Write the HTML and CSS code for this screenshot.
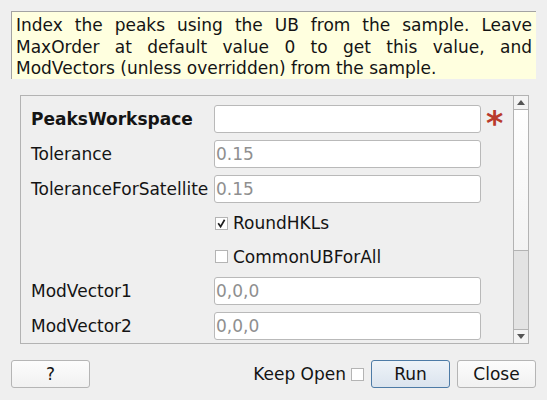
FILE: index.html
```html
<!DOCTYPE html>
<html>
<head>
<meta charset="utf-8">
<link rel="stylesheet" href="styles.css">
</head>
<body>
<div class="dialog">
  <div class="desc">Index the peaks using the UB from the sample. Leave MaxOrder at default value 0 to get this value, and ModVectors (unless overridden) from the sample.</div>
  <div class="scrollframe">
    <div class="content">
      <div class="lbl bold">PeaksWorkspace</div>
      <div class="field"></div>
      <div class="req">*</div>

      <div class="lbl">Tolerance</div>
      <div class="field ph">0.15</div>
      <div></div>

      <div class="lbl">ToleranceForSatellite</div>
      <div class="field ph">0.15</div>
      <div></div>

      <div></div>
      <div class="check"><span class="box"><svg width="11" height="11" viewBox="0 0 11 11"><path d="M2.2 5.2 L4.6 8.6 L8.6 1.8" fill="none" stroke="#1e1e1e" stroke-width="1.7"/></svg></span>RoundHKLs</div>
      <div></div>

      <div></div>
      <div class="check"><span class="box"></span>CommonUBForAll</div>
      <div></div>

      <div class="lbl">ModVector1</div>
      <div class="field ph">0,0,0</div>
      <div></div>

      <div class="lbl">ModVector2</div>
      <div class="field ph">0,0,0</div>
      <div></div>
    </div>
    <div class="vscroll">
      <div class="arrow up"><svg width="8" height="5" viewBox="0 0 8 5"><path d="M0 5 L4 0 L8 5 Z" fill="#555"/></svg></div>
      <div class="handle"></div>
      <div class="track"></div>
      <div class="arrow down"><svg width="8" height="5" viewBox="0 0 8 5"><path d="M0 0 L4 5 L8 0 Z" fill="#555"/></svg></div>
    </div>
  </div>
  <div class="buttons">
    <div class="btn">?</div>
    <div class="spacer"></div>
    <div class="keep">Keep Open</div>
    <span class="box keepbox"></span>
    <div class="btn run">Run</div>
    <div class="btn">Close</div>
  </div>
</div>
</body>
</html>
```

FILE: styles.css
```css
html, body {
  margin: 0;
  padding: 0;
  background: #efefef;
}
body {
  font-family: "DejaVu Sans", sans-serif;
  font-size: 17px;
  color: #141414;
  width: 547px;
  height: 400px;
  overflow: hidden;
}
.dialog {
  padding: 11px 11px 0 11px;
  display: flex;
  flex-direction: column;
}
.desc {
  height: 68px;
  box-sizing: border-box;
  background: #ffffdf;
  border-top: 1px solid #a3a3a3;
  border-left: 1px solid #a3a3a3;
  padding: 3px 4px 0 4px;
  line-height: 21.5px;
  text-align: justify;
}
.scrollframe {
  margin: 16px 7px 0 9px;
  height: 249px;
  box-sizing: border-box;
  border: 1px solid #b3b3b3;
  display: flex;
  overflow: hidden;
}
.content {
  flex: 1;
  display: grid;
  grid-template-columns: 183px 267px 1fr;
  grid-template-rows: 28px 28px 28px 26.5px 26.5px 28px 28px;
  row-gap: 7px;
  padding: 9px 0 0 10px;
  align-items: center;
}
.lbl {
  white-space: nowrap;
}
.bold {
  font-weight: bold;
}
.field {
  height: 28px;
  box-sizing: border-box;
  background: #ffffff;
  border: 1px solid #b9b9b9;
  border-radius: 3px;
  padding-left: 1px;
  line-height: 26px;
}
.ph {
  color: #8f8f8f;
}
.req {
  color: #b93a2b;
  font-weight: bold;
  font-size: 33px;
  line-height: 28px;
  padding-left: 5px;
  height: 28px;
  position: relative;
  top: 5px;
}
.check {
  display: flex;
  align-items: center;
  padding-left: 1px;
}
.box {
  width: 13px;
  height: 13px;
  box-sizing: border-box;
  border: 1px solid #b4b4b4;
  background: #ffffff;
  display: inline-flex;
  align-items: center;
  justify-content: center;
  margin-right: 5px;
  flex: none;
}
.box svg {
  display: block;
}
.vscroll {
  width: 14px;
  border-left: 1px solid #b3b3b3;
  display: flex;
  flex-direction: column;
}
.arrow {
  height: 13px;
  background: #f4f4f4;
  display: flex;
  align-items: center;
  justify-content: center;
}
.arrow.up {
  border-bottom: 1px solid #b3b3b3;
}
.arrow.down {
  border-top: 1px solid #b3b3b3;
}
.arrow svg {
  display: block;
}
.handle {
  height: 140px;
  background: linear-gradient(to bottom, #ffffff, #f3f3f3);
  border-bottom: 1px solid #b3b3b3;
}
.track {
  flex: 1;
  background: #e3e3e3;
}
.buttons {
  margin-top: 16px;
  height: 28px;
  display: flex;
  align-items: center;
}
.btn {
  width: 79px;
  height: 28px;
  box-sizing: border-box;
  border: 1px solid #b5b5b5;
  border-radius: 3px;
  background: linear-gradient(to bottom, #fcfcfc, #f1f1f1);
  display: flex;
  align-items: center;
  justify-content: center;
}
.spacer {
  flex: 1;
}
.keep {
  margin-right: 5px;
}
.keepbox {
  margin-right: 7px;
}
.btn.run {
  border-color: #4d7ba6;
  background: linear-gradient(to bottom, #eef3f8, #dbe4ee);
  margin-right: 7px;
}
```
